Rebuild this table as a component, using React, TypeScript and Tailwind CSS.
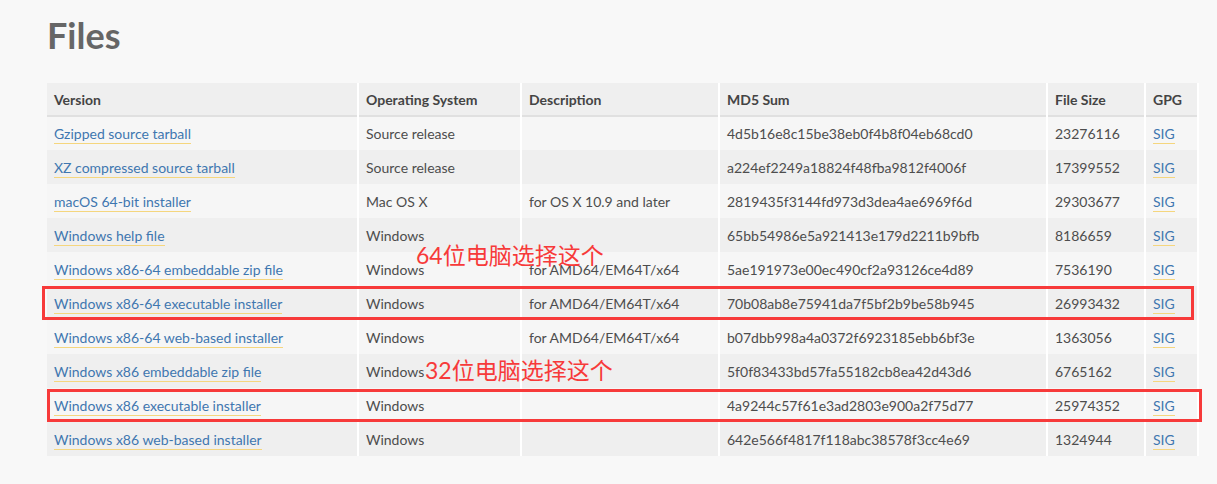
import React from 'react'

interface FileRow {
  version: string
  os: string
  desc: string
  md5: string
  size: string
}

const rows: FileRow[] = [
  { version: 'Gzipped source tarball', os: 'Source release', desc: '', md5: '4d5b16e8c15be38eb0f4b8f04eb68cd0', size: '23276116' },
  { version: 'XZ compressed source tarball', os: 'Source release', desc: '', md5: 'a224ef2249a18824f48fba9812f4006f', size: '17399552' },
  { version: 'macOS 64-bit installer', os: 'Mac OS X', desc: 'for OS X 10.9 and later', md5: '2819435f3144fd973d3dea4ae6969f6d', size: '29303677' },
  { version: 'Windows help file', os: 'Windows', desc: '', md5: '65bb54986e5a921413e179d2211b9bfb', size: '8186659' },
  { version: 'Windows x86-64 embeddable zip file', os: 'Windows', desc: 'for AMD64/EM64T/x64', md5: '5ae191973e00ec490cf2a93126ce4d89', size: '7536190' },
  { version: 'Windows x86-64 executable installer', os: 'Windows', desc: 'for AMD64/EM64T/x64', md5: '70b08ab8e75941da7f5bf2b9be58b945', size: '26993432' },
  { version: 'Windows x86-64 web-based installer', os: 'Windows', desc: 'for AMD64/EM64T/x64', md5: 'b07dbb998a4a0372f6923185ebb6bf3e', size: '1363056' },
  { version: 'Windows x86 embeddable zip file', os: 'Windows', desc: '', md5: '5f0f83433bd57fa55182cb8ea42d43d6', size: '6765162' },
  { version: 'Windows x86 executable installer', os: 'Windows', desc: '', md5: '4a9244c57f61e3ad2803e900a2f75d77', size: '25974352' },
  { version: 'Windows x86 web-based installer', os: 'Windows', desc: '', md5: '642e566f4817f118abc38578f3cc4e69', size: '1324944' },
]

const base = 'px-[7px] border-r-2 border-white align-middle whitespace-nowrap'
const cell = `h-[34px] ${base}`
const head = `h-[33px] ${base}`

function Link({ children }: { children: React.ReactNode }) {
  return <a className="text-[#3f77b0] border-b border-[#f5d67e] pb-[1px]">{children}</a>
}

export default function App() {
  return (
    <div className="relative min-h-[484px] bg-[#f8f8f8] px-[47px] pt-[13px] text-[14px] text-[#4d4d4d]" style={{ fontFamily: 'Lato, "Noto Sans CJK SC", sans-serif' }}>
      <h1 className="text-[36px] font-bold leading-[44px] text-[#666666]">Files</h1>
      <table className="mt-[26px] w-[1151px] table-fixed border-collapse">
        <colgroup>
          <col className="w-[311px]" />
          <col className="w-[163px]" />
          <col className="w-[198px]" />
          <col className="w-[328px]" />
          <col className="w-[98px]" />
          <col className="w-[53px]" />
        </colgroup>
        <thead>
          <tr className="bg-[#efefef] border-b-2 border-[#e0e0e0] text-left font-bold text-[#444444]">
            <th className={head}>Version</th>
            <th className={head}>Operating System</th>
            <th className={head}>Description</th>
            <th className={head}>MD5 Sum</th>
            <th className={head}>File Size</th>
            <th className={`${head} border-r-0`}>GPG</th>
          </tr>
        </thead>
        <tbody>
          {rows.map((r, i) => (
            <tr key={r.md5} className={i % 2 === 0 ? 'bg-[#f6f6f6]' : 'bg-[#efefef]'}>
              <td className={cell}><Link>{r.version}</Link></td>
              <td className={cell}>{r.os}</td>
              <td className={cell}>{r.desc}</td>
              <td className={cell}>{r.md5}</td>
              <td className={cell}>{r.size}</td>
              <td className={`${cell} border-r-0`}><Link>SIG</Link></td>
            </tr>
          ))}
        </tbody>
      </table>

      <div className="absolute left-[42px] top-[286px] w-[1152px] h-[34px] border-[3px] border-[#f73a3a]" />
      <div className="absolute left-[47px] top-[389px] w-[1155px] h-[33px] border-[3px] border-[#f73a3a]" />
      <div className="absolute left-[416px] top-[241px] text-[23px] leading-[28px] text-[#f73a3a]">64位电脑选择这个</div>
      <div className="absolute left-[425px] top-[356px] text-[23px] leading-[28px] text-[#f73a3a]">32位电脑选择这个</div>
    </div>
  )
}
